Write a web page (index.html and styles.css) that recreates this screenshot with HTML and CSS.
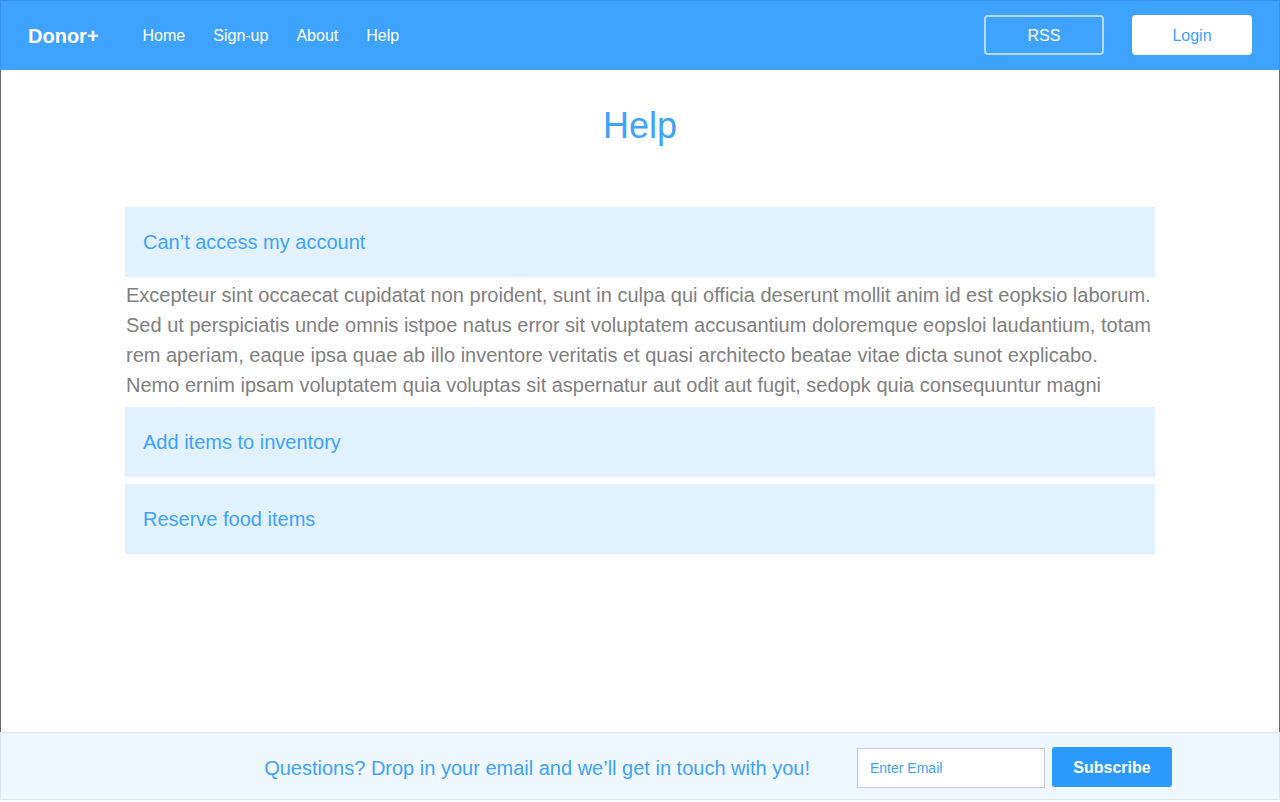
FILE: index.html
```html
<!DOCTYPE html>
<html lang="en">
<head>
<meta charset="utf-8">
<title>Help - Donor+</title>
<link rel="stylesheet" href="styles.css">
</head>
<body>
<div class="page">
  <header class="topbar">
    <div class="logo">Donor+</div>
    <nav class="nav">
      <a href="#">Home</a>
      <a href="#">Sign-up</a>
      <a href="#">About</a>
      <a href="#">Help</a>
    </nav>
    <div class="actions">
      <button class="btn-outline">RSS</button>
      <button class="btn-white">Login</button>
    </div>
  </header>
  <main class="main">
    <h1 class="title">Help</h1>
    <div class="accordion">
      <div class="acc-item">
        <div class="acc-head">Can’t access my account</div>
        <p class="acc-body">Excepteur sint occaecat cupidatat non proident, sunt in culpa qui officia deserunt mollit anim id est eopksio laborum. Sed ut perspiciatis unde omnis istpoe natus error sit voluptatem accusantium doloremque eopsloi laudantium, totam rem aperiam, eaque ipsa quae ab illo inventore veritatis et quasi architecto beatae vitae dicta sunot explicabo. Nemo ernim ipsam voluptatem quia voluptas sit aspernatur aut odit aut fugit, sedopk quia consequuntur magni</p>
      </div>
      <div class="acc-item">
        <div class="acc-head">Add items to inventory</div>
      </div>
      <div class="acc-item">
        <div class="acc-head">Reserve food items</div>
      </div>
    </div>
  </main>
  <footer class="footer">
    <span class="footer-text">Questions? Drop in your email and we’ll get in touch with you!</span>
    <input class="email" type="text" placeholder="Enter Email">
    <button class="btn-subscribe">Subscribe</button>
  </footer>
</div>
</body>
</html>
```
FILE: styles.css
```css
* { box-sizing: border-box; }
html, body { margin: 0; padding: 0; background: #fff; }
body { font-family: "Liberation Sans", Arial, sans-serif; }

.page {
  display: flex;
  flex-direction: column;
  height: 800px;
}

.topbar {
  height: 70px;
  flex: none;
  display: flex;
  align-items: center;
  background: #3ea3fc;
  border: 1px solid #3393ea;
  border-bottom: none;
  padding: 0 27px 1px;
}
.logo {
  color: #fff;
  font-weight: bold;
  font-size: 20px;
  margin-top: 2px;
}
.nav {
  display: flex;
  gap: 28px;
  margin-left: 44px;
  margin-top: 2px;
}
.nav a {
  color: #fff;
  text-decoration: none;
  font-size: 16px;
}
.actions {
  margin-left: auto;
  display: flex;
  gap: 28px;
}
.btn-outline, .btn-white {
  width: 120px;
  height: 40px;
  padding-top: 2px;
  font-family: inherit;
  font-size: 16px;
  border-radius: 4px;
  cursor: pointer;
}
.btn-outline {
  background: transparent;
  color: #fff;
  border: 2px solid rgba(255,255,255,0.6);
}
.btn-white {
  background: #fff;
  color: #3ea3fc;
  border: none;
}

.main {
  flex: 1;
  border-left: 1px solid #6b6b6b;
  border-right: 1px solid #6b6b6b;
  padding-top: 36px;
}
.title {
  margin: 0;
  text-align: center;
  font-weight: normal;
  font-size: 36px;
  line-height: 40px;
  color: #3ea3fc;
}
.accordion {
  width: 1030px;
  margin: 61px auto 0;
}
.acc-item { margin-bottom: 7px; }
.acc-head {
  height: 70px;
  display: flex;
  align-items: center;
  padding-left: 18px;
  background: #e1f1fe;
  color: #3ea3fc;
  font-size: 20px;
}
.acc-body {
  margin: 0;
  padding: 3px 0 0 1px;
  font-size: 20px;
  line-height: 30px;
  color: #808080;
}

.footer {
  height: 68px;
  flex: none;
  display: flex;
  align-items: center;
  justify-content: flex-end;
  padding: 4px 107px 0 0;
  background: #f0f8ff;
  border: 1px solid #dce6f0;
}
.footer-text {
  color: #3ea3fc;
  font-size: 20px;
  margin-right: 47px;
}
.email {
  width: 188px;
  height: 40px;
  border: 1px solid #cccccc;
  background: #fff;
  padding: 0 12px;
  font-family: inherit;
  font-size: 14px;
  color: #3ea3fc;
  outline: none;
}
.email::placeholder { color: #3ea3fc; opacity: 1; }
.btn-subscribe {
  width: 120px;
  height: 40px;
  margin-left: 7px;
  margin-bottom: 2px;
  padding-top: 2px;
  background: #2b9afc;
  color: #fff;
  border: none;
  border-radius: 3px;
  font-family: inherit;
  font-weight: bold;
  font-size: 16px;
  cursor: pointer;
}
```
